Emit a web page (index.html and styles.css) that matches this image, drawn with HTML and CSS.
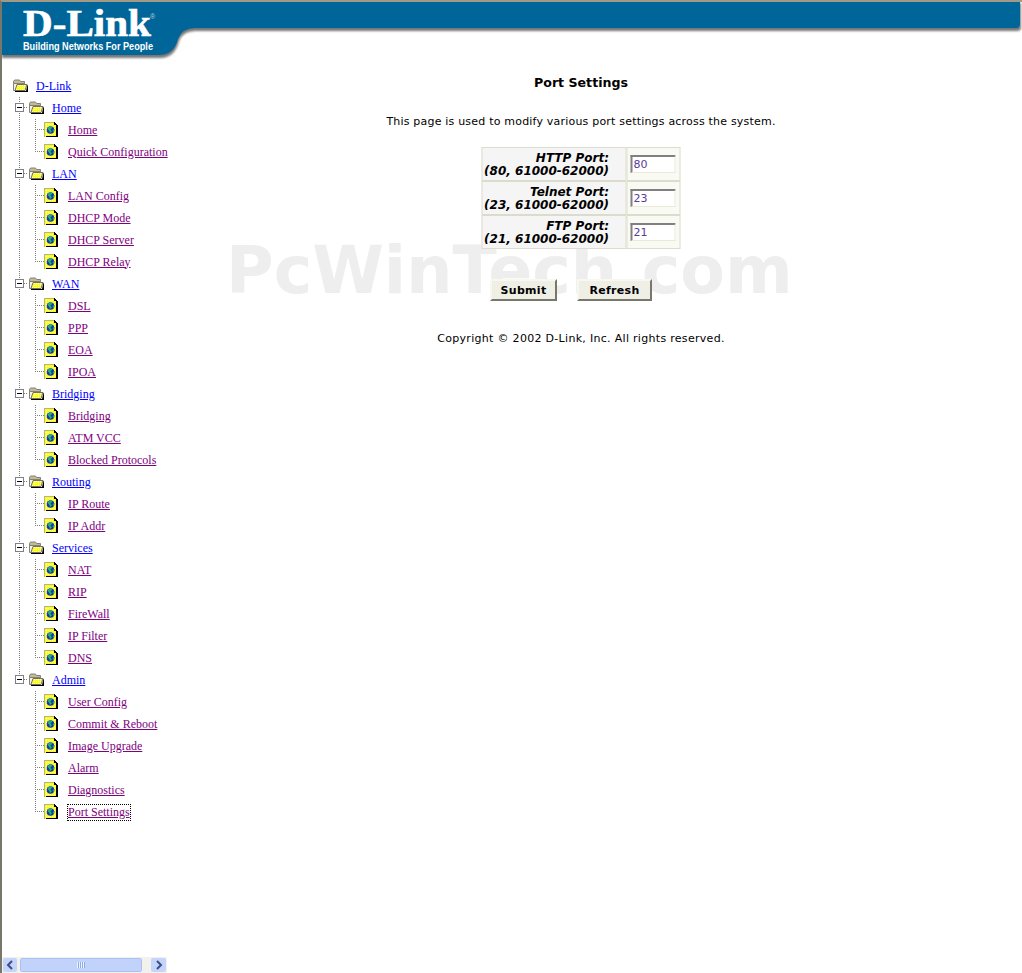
FILE: index.html
```html
<!DOCTYPE html>
<html lang="en">
<head>
    <meta charset="UTF-8">
    <meta name="viewport" content="width=device-width, initial-scale=1.0">
    <title>Port Settings</title>
    <link rel="stylesheet" href="styles.css">
</head>
<body>
    <svg class="defs" width="0" height="0">
        <defs>
            <pattern id="dither" width="2" height="2" patternUnits="userSpaceOnUse">
                <rect width="2" height="2" fill="#ffff00"/>
                <rect width="1" height="1" fill="#ffffff"/>
            </pattern>
            <filter id="soft" x="-2%" y="-20%" width="104%" height="140%">
                <feGaussianBlur stdDeviation="1"/>
            </filter>
            <symbol id="folder" viewBox="0 0 16 16">
                <g transform="translate(0 -1)">
                    <path d="M1.500 4.500l1-1.500h5l1 1.500h4v2h-11z" fill="#c8b88c" stroke="#808080"/>
                    <path d="M1.500 6.500h11v1h-7l-2 6h-2z" fill="#f4f2e8" stroke="#808080"/>
                    <path d="M5 7.500h10l-2 6H3z" fill="url(#dither)" stroke="#6e6e6e"/>
                    <path d="M3 14h11l1.500-6h.5v7H3z" fill="#000"/>
                </g>
            </symbol>
            <symbol id="page" viewBox="0 0 16 16">
                <path d="M1 0h9l3 3v12H1z" fill="url(#dither)"/>
                <path d="M0 0h1v15H0zM1 0h9v1H1z" fill="#b0b0a0"/>
                <path d="M10 0h1v1h1v1h1v1h1v12H2v-1h10V3h-2z" fill="#000"/>
                <circle cx="6.500" cy="8" r="3.800" fill="#1030c8"/>
                <path d="M4 5.500l3-1.500 1.500 1.500-2 2 1.500 2-2 1.500-1-2.500-1.500-1.500zM8.500 8l2-1v2l-1 1z" fill="#28b060"/>
            </symbol>
            <symbol id="minus" viewBox="0 0 16 22">
                <path d="M12 10.500h4" stroke="#808080" stroke-dasharray="1 1"/>
                <rect x="3.500" y="6.500" width="8" height="8" fill="#fff" stroke="#808080"/>
                <path d="M5 10.500h5" stroke="#000"/>
            </symbol>
        </defs>
    </svg>

    <header class="banner">
        <svg class="banner-art" width="1020" height="60" viewBox="0 0 1020 60">
            <path d="M0 1H1019V26Q1019 29 1015 29H193Q181 29 177 39Q173 56 158 56H0Z" fill="#777" filter="url(#soft)"/>
            <path d="M0 0H1018V22Q1018 26 1014 26H193Q180 26 176 37Q172 53 157 53H0Z" fill="#006699"/>
            <text class="logo-name" x="21" y="34" textLength="128" lengthAdjust="spacingAndGlyphs">D-Link</text>
            <text class="logo-mark" x="148" y="17">®</text>
            <text class="logo-tag" x="21" y="48" textLength="130" lengthAdjust="spacingAndGlyphs">Building Networks For People</text>
        </svg>
    </header>

    <div class="page">
        <aside class="side">
            <nav class="tree">
                <div class="row"><span class="tw"><svg class="ico"><use href="#folder"/></svg></span><a href="#" class="node">D-Link</a></div>

                <div class="row"><span class="tw v"><svg class="box"><use href="#minus"/></svg></span><svg class="ico"><use href="#folder"/></svg><a href="#" class="node">Home</a></div>
                <div class="row"><span class="tw v"></span><span class="tw tee"></span><svg class="ico"><use href="#page"/></svg><a href="#" class="leaf">Home</a></div>
                <div class="row"><span class="tw v"></span><span class="tw end"></span><svg class="ico"><use href="#page"/></svg><a href="#" class="leaf">Quick Configuration</a></div>

                <div class="row"><span class="tw v"><svg class="box"><use href="#minus"/></svg></span><svg class="ico"><use href="#folder"/></svg><a href="#" class="node">LAN</a></div>
                <div class="row"><span class="tw v"></span><span class="tw tee"></span><svg class="ico"><use href="#page"/></svg><a href="#" class="leaf">LAN Config</a></div>
                <div class="row"><span class="tw v"></span><span class="tw tee"></span><svg class="ico"><use href="#page"/></svg><a href="#" class="leaf">DHCP Mode</a></div>
                <div class="row"><span class="tw v"></span><span class="tw tee"></span><svg class="ico"><use href="#page"/></svg><a href="#" class="leaf">DHCP Server</a></div>
                <div class="row"><span class="tw v"></span><span class="tw end"></span><svg class="ico"><use href="#page"/></svg><a href="#" class="leaf">DHCP Relay</a></div>

                <div class="row"><span class="tw v"><svg class="box"><use href="#minus"/></svg></span><svg class="ico"><use href="#folder"/></svg><a href="#" class="node">WAN</a></div>
                <div class="row"><span class="tw v"></span><span class="tw tee"></span><svg class="ico"><use href="#page"/></svg><a href="#" class="leaf">DSL</a></div>
                <div class="row"><span class="tw v"></span><span class="tw tee"></span><svg class="ico"><use href="#page"/></svg><a href="#" class="leaf">PPP</a></div>
                <div class="row"><span class="tw v"></span><span class="tw tee"></span><svg class="ico"><use href="#page"/></svg><a href="#" class="leaf">EOA</a></div>
                <div class="row"><span class="tw v"></span><span class="tw end"></span><svg class="ico"><use href="#page"/></svg><a href="#" class="leaf">IPOA</a></div>

                <div class="row"><span class="tw v"><svg class="box"><use href="#minus"/></svg></span><svg class="ico"><use href="#folder"/></svg><a href="#" class="node">Bridging</a></div>
                <div class="row"><span class="tw v"></span><span class="tw tee"></span><svg class="ico"><use href="#page"/></svg><a href="#" class="leaf">Bridging</a></div>
                <div class="row"><span class="tw v"></span><span class="tw tee"></span><svg class="ico"><use href="#page"/></svg><a href="#" class="leaf">ATM VCC</a></div>
                <div class="row"><span class="tw v"></span><span class="tw end"></span><svg class="ico"><use href="#page"/></svg><a href="#" class="leaf">Blocked Protocols</a></div>

                <div class="row"><span class="tw v"><svg class="box"><use href="#minus"/></svg></span><svg class="ico"><use href="#folder"/></svg><a href="#" class="node">Routing</a></div>
                <div class="row"><span class="tw v"></span><span class="tw tee"></span><svg class="ico"><use href="#page"/></svg><a href="#" class="leaf">IP Route</a></div>
                <div class="row"><span class="tw v"></span><span class="tw end"></span><svg class="ico"><use href="#page"/></svg><a href="#" class="leaf">IP Addr</a></div>

                <div class="row"><span class="tw v"><svg class="box"><use href="#minus"/></svg></span><svg class="ico"><use href="#folder"/></svg><a href="#" class="node">Services</a></div>
                <div class="row"><span class="tw v"></span><span class="tw tee"></span><svg class="ico"><use href="#page"/></svg><a href="#" class="leaf">NAT</a></div>
                <div class="row"><span class="tw v"></span><span class="tw tee"></span><svg class="ico"><use href="#page"/></svg><a href="#" class="leaf">RIP</a></div>
                <div class="row"><span class="tw v"></span><span class="tw tee"></span><svg class="ico"><use href="#page"/></svg><a href="#" class="leaf">FireWall</a></div>
                <div class="row"><span class="tw v"></span><span class="tw tee"></span><svg class="ico"><use href="#page"/></svg><a href="#" class="leaf">IP Filter</a></div>
                <div class="row"><span class="tw v"></span><span class="tw end"></span><svg class="ico"><use href="#page"/></svg><a href="#" class="leaf">DNS</a></div>

                <div class="row"><span class="tw end-short"><svg class="box"><use href="#minus"/></svg></span><svg class="ico"><use href="#folder"/></svg><a href="#" class="node">Admin</a></div>
                <div class="row"><span class="tw"></span><span class="tw tee"></span><svg class="ico"><use href="#page"/></svg><a href="#" class="leaf">User Config</a></div>
                <div class="row"><span class="tw"></span><span class="tw tee"></span><svg class="ico"><use href="#page"/></svg><a href="#" class="leaf">Commit &amp; Reboot</a></div>
                <div class="row"><span class="tw"></span><span class="tw tee"></span><svg class="ico"><use href="#page"/></svg><a href="#" class="leaf">Image Upgrade</a></div>
                <div class="row"><span class="tw"></span><span class="tw tee"></span><svg class="ico"><use href="#page"/></svg><a href="#" class="leaf">Alarm</a></div>
                <div class="row"><span class="tw"></span><span class="tw tee"></span><svg class="ico"><use href="#page"/></svg><a href="#" class="leaf">Diagnostics</a></div>
                <div class="row"><span class="tw"></span><span class="tw end"></span><svg class="ico"><use href="#page"/></svg><a href="#" class="leaf current">Port Settings</a></div>
            </nav>

            <div class="hscroll">
                <span class="sb-btn"><svg width="14" height="14" viewBox="0 0 14 14"><path d="M9 3L5 7l4 4" fill="none" stroke="#3c4f80" stroke-width="2"/></svg></span>
                <span class="sb-thumb"><span class="sb-grip"></span></span>
                <span class="sb-btn sb-next"><svg width="15" height="14" viewBox="0 0 15 14"><path d="M6 3l4 4-4 4" fill="none" stroke="#3c4f80" stroke-width="2"/></svg></span>
            </div>
        </aside>

        <main class="content">
            <div class="watermark">PcWinTech.com</div>
            <h1 class="title">Port Settings</h1>
            <p class="intro">This page is used to modify various port settings across the system.</p>
            <form>
                <table class="ports">
                    <tr>
                        <th>HTTP Port:<br>(80, 61000-62000)</th>
                        <td><input type="text" class="port-input" value="80"></td>
                    </tr>
                    <tr>
                        <th>Telnet Port:<br>(23, 61000-62000)</th>
                        <td><input type="text" class="port-input" value="23"></td>
                    </tr>
                    <tr>
                        <th>FTP Port:<br>(21, 61000-62000)</th>
                        <td><input type="text" class="port-input" value="21"></td>
                    </tr>
                </table>
                <div class="actions">
                    <button type="button" class="btn btn-submit">Submit</button>
                    <button type="button" class="btn btn-refresh">Refresh</button>
                </div>
            </form>
            <p class="copy">Copyright &copy; 2002 D-Link, Inc. All rights reserved.</p>
        </main>
    </div>
</body>
</html>
```

FILE: styles.css
```css
html, body {
    height: 100%;
}
body {
    margin: 0;
    background: #ffffff;
    border-top: 2px solid #a09a84;
    border-left: 2px solid #77776a;
    box-sizing: border-box;
    display: flex;
    flex-direction: column;
    overflow: hidden;
    font-family: "DejaVu Sans", sans-serif;
}
.defs {
    position: absolute;
}

/* banner */
.banner {
    height: 56px;
    flex: none;
}
.banner-art {
    display: block;
}
.logo-name {
    font-family: "Liberation Serif", serif;
    font-weight: bold;
    font-size: 38px;
    fill: #ffffff;
    stroke: #ffffff;
    stroke-width: .6px;
}
.logo-mark {
    font-family: "Liberation Sans", sans-serif;
    font-size: 7px;
    fill: #b8d0dc;
}
.logo-tag {
    font-family: "Liberation Sans", sans-serif;
    font-weight: bold;
    font-size: 11px;
    fill: #ffffff;
}

.page {
    flex: 1;
    display: flex;
    min-height: 0;
}

/* left tree */
.side {
    width: 166px;
    flex: none;
    display: flex;
    flex-direction: column;
}
.tree {
    flex: 1;
    padding: 17px 0 0 10px;
    overflow: hidden;
}
.row {
    height: 22px;
    display: flex;
    align-items: center;
    font-family: "Liberation Serif", serif;
    font-size: 12px;
    white-space: nowrap;
}
.tw {
    width: 16px;
    height: 22px;
    flex: none;
    display: flex;
    align-items: center;
    background-repeat: no-repeat;
}
.v {
    background-image: repeating-linear-gradient(to bottom, #808080 0 1px, transparent 1px 2px);
    background-size: 1px 100%;
    background-position: 7px 0;
}
.tee {
    background-image:
        repeating-linear-gradient(to bottom, #808080 0 1px, transparent 1px 2px),
        repeating-linear-gradient(to right, #808080 0 1px, transparent 1px 2px);
    background-size: 1px 100%, 9px 1px;
    background-position: 7px 0, 7px 10px;
}
.end {
    background-image:
        repeating-linear-gradient(to bottom, #808080 0 1px, transparent 1px 2px),
        repeating-linear-gradient(to right, #808080 0 1px, transparent 1px 2px);
    background-size: 1px 11px, 9px 1px;
    background-position: 7px 0, 7px 10px;
}
.end-short {
    background-image: repeating-linear-gradient(to bottom, #808080 0 1px, transparent 1px 2px);
    background-size: 1px 7px;
    background-position: 7px 0;
}
.box {
    width: 16px;
    height: 22px;
    display: block;
}
.ico {
    width: 16px;
    height: 16px;
    flex: none;
    display: block;
}
.row a {
    margin-left: 8px;
}
.node {
    color: #0000ff;
}
.leaf {
    color: #800080;
}
.current {
    outline: 1px dotted #000000;
}

/* horizontal scrollbar, luna style */
.hscroll {
    height: 16px;
    width: 165px;
    flex: none;
    background: #f3f1ec;
    display: flex;
    padding-left: 1px;
    box-sizing: border-box;
}
.sb-btn {
    width: 14px;
    height: 14px;
    margin-top: 1px;
    flex: none;
    background: #c4d4fa;
    border-radius: 2px;
    display: block;
}
.sb-next {
    width: 15px;
    margin-left: 9px;
}
.sb-btn svg {
    display: block;
}
.sb-thumb {
    width: 122px;
    height: 14px;
    margin: 1px 0 0 3px;
    flex: none;
    background: #c1d3fb;
    border: 1px solid #ffffff;
    outline: 1px solid #a9c0f0;
    outline-offset: -1px;
    border-radius: 2px;
    box-sizing: border-box;
    display: flex;
    align-items: center;
    justify-content: center;
}
.sb-grip {
    width: 8px;
    height: 6px;
    background: repeating-linear-gradient(to right, #eef4ff 0 1px, #8cabe8 1px 2px);
}

/* right content */
.content {
    position: relative;
    flex: 1;
    padding: 0 28px 0 0;
    text-align: center;
    font-size: 11px;
    color: #000000;
}
.watermark {
    position: absolute;
    left: 58px;
    top: 180px;
    font-family: "DejaVu Sans", sans-serif;
    font-weight: bold;
    font-size: 65px;
    line-height: 66px;
    color: #eeeeee;
    white-space: nowrap;
}
.title {
    position: relative;
    margin: 16px 0 0;
    font-size: 12.600px;
    line-height: 17px;
    font-weight: bold;
}
.intro {
    position: relative;
    margin: 23px 0 0;
    line-height: 16px;
    letter-spacing: .2px;
}
form {
    position: relative;
}
.ports {
    margin: 17px auto 0;
    border-spacing: 0;
    border-collapse: separate;
    transform: translateX(-.5px);
}
.ports th, .ports td {
    border: 1px solid #dcdccc;
    padding: 0;
    height: 32px;
    background: #f5f5f5;
}
.ports th {
    width: 127px;
    height: 31px;
    padding: 1px 16px 0 0;
    text-align: right;
    font-style: italic;
    font-weight: bold;
    font-size: 12px;
    line-height: 13px;
}
.ports td {
    width: 52px;
    text-align: center;
    background: #fafaf4;
}
.port-input {
    width: 45px;
    height: 18px;
    box-sizing: border-box;
    display: block;
    margin: 0 auto;
    padding: 0 0 0 1px;
    border-style: solid;
    border-width: 2px 1px 1px 2px;
    border-color: #808080 #ece9d8 #ece9d8 #808080;
    background: #ffffff;
    font-family: "DejaVu Sans", sans-serif;
    font-size: 11px;
    color: #5a3a9c;
}
.actions {
    margin-top: 30px;
    display: flex;
    justify-content: center;
    gap: 20px;
    padding-right: 20px;
}
.btn {
    height: 22px;
    padding: 0;
    background: #efefe6;
    border: 2px solid;
    border-color: #f8f8f0 #77776a #77776a #f8f8f0;
    font-family: "DejaVu Sans", sans-serif;
    font-size: 11px;
    font-weight: bold;
    letter-spacing: .3px;
    color: #000000;
}
.btn-submit {
    width: 67px;
}
.btn-refresh {
    width: 75px;
}
.copy {
    position: relative;
    margin: 30px 0 0;
    line-height: 16px;
    letter-spacing: .3px;
}
```
